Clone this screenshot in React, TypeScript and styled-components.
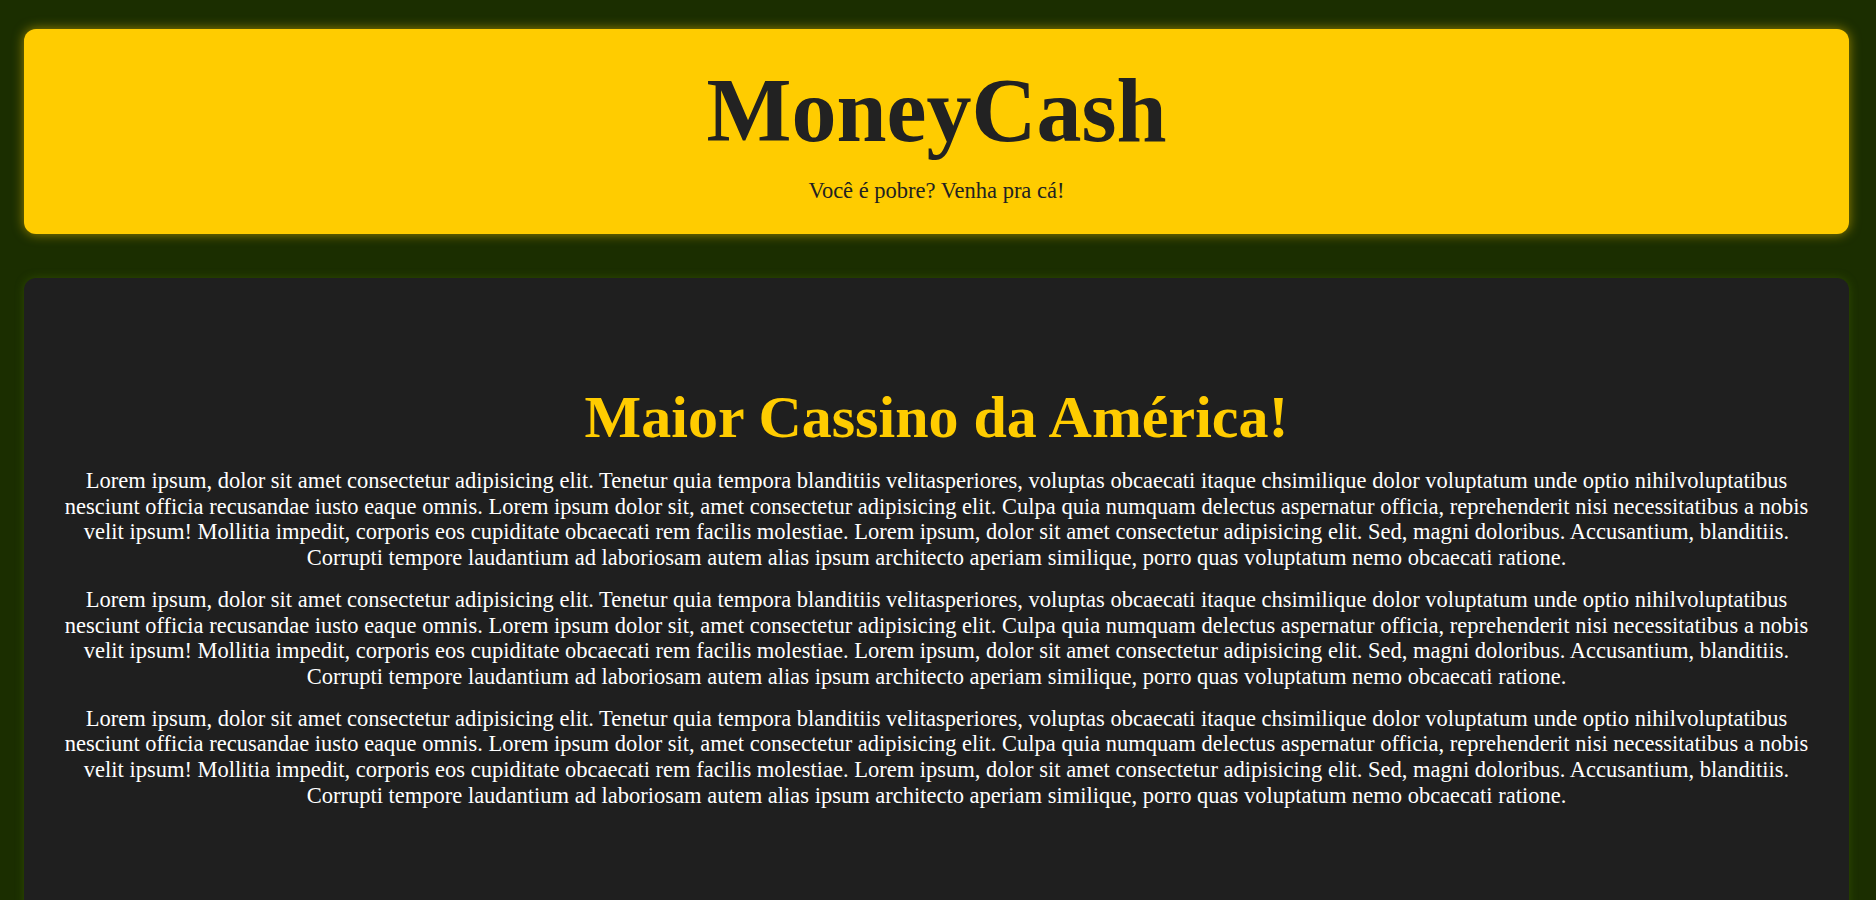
import React from 'react'
import styled, { createGlobalStyle } from 'styled-components'

const lorem =
  'Lorem ipsum, dolor sit amet consectetur adipisicing elit. Tenetur quia tempora blanditiis velitasperiores, voluptas obcaecati itaque chsimilique dolor voluptatum unde optio nihilvoluptatibus nesciunt officia recusandae iusto eaque omnis. Lorem ipsum dolor sit, amet consectetur adipisicing elit. Culpa quia numquam delectus aspernatur officia, reprehenderit nisi necessitatibus a nobis velit ipsum! Mollitia impedit, corporis eos cupiditate obcaecati rem facilis molestiae. Lorem ipsum, dolor sit amet consectetur adipisicing elit. Sed, magni doloribus. Accusantium, blanditiis. Corrupti tempore laudantium ad laboriosam autem alias ipsum architecto aperiam similique, porro quas voluptatum nemo obcaecati ratione.'

export default function App() {
  return (
    <>
      <GlobalStyle />
      <Page>
        <Header>
          <Logo>MoneyCash</Logo>
          <Slogan>Você é pobre? Venha pra cá!</Slogan>
        </Header>

        <Main>
          <Title>Maior Cassino da América!</Title>
          {[1, 2, 3].map((n) => (
            <Text key={n}>{lorem}</Text>
          ))}
        </Main>
      </Page>
    </>
  )
}

const GlobalStyle = createGlobalStyle`
  html, body {
    margin: 0;
    padding: 0;
    background-color: #1b2e00;
    font-family: "Liberation Serif", "Times New Roman", serif;
  }
`

const Page = styled.div`
  display: flex;
  flex-direction: column;
  gap: 44px;
  padding: 29px 27px 0 24px;
  overflow: hidden;
`

const Header = styled.header`
  display: flex;
  flex-direction: column;
  align-items: center;
  gap: 16px;
  padding: 30px 20px 30px;
  background-color: #ffcc00;
  border-radius: 12px;
  box-shadow: 0 0 12px rgba(255, 204, 0, 0.55);
  color: #222;
`

const Logo = styled.h1`
  margin: 0;
  font-size: 90px;
  font-weight: bold;
  line-height: normal;
`

const Slogan = styled.p`
  margin: 0;
  font-size: 22.5px;
  line-height: normal;
`

const Main = styled.main`
  min-height: 700px;
  padding: 105px 37px;
  background-color: #1f1f1f;
  border-radius: 12px;
  box-shadow: 0 0 10px rgba(70, 110, 0, 0.45);
  text-align: center;
`

const Title = styled.h2`
  margin: 0;
  color: #ffcc00;
  font-size: 60px;
  font-weight: bold;
  line-height: normal;
`

const Text = styled.p`
  margin: 16px 0 0;
  color: #fff;
  font-size: 22.5px;
  line-height: 25.7px;
`
